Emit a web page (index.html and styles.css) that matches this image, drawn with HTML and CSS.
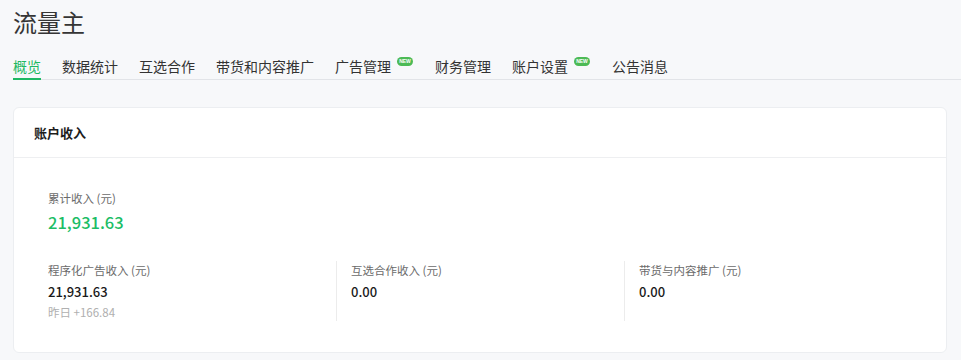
FILE: index.html
```html
<!DOCTYPE html>
<html lang="zh-CN">
<head>
<meta charset="utf-8">
<title>流量主</title>
<link rel="stylesheet" href="styles.css">
</head>
<body>
<div class="page">
  <h1 class="title">流量主</h1>
  <nav class="tabs">
    <a class="tab active">概览</a>
    <a class="tab">数据统计</a>
    <a class="tab">互选合作</a>
    <a class="tab">带货和内容推广</a>
    <a class="tab">广告管理<span class="badge">NEW</span></a>
    <a class="tab">财务管理</a>
    <a class="tab">账户设置<span class="badge">NEW</span></a>
    <a class="tab">公告消息</a>
  </nav>
  <section class="card">
    <div class="card-head">账户收入</div>
    <div class="card-body">
      <div class="total">
        <div class="label">累计收入 (元)</div>
        <div class="total-value">21,931.63</div>
      </div>
      <div class="stats">
        <div class="stat">
          <div class="label">程序化广告收入 (元)</div>
          <div class="value">21,931.63</div>
          <div class="sub">昨日 +166.84</div>
        </div>
        <div class="stat">
          <div class="label">互选合作收入 (元)</div>
          <div class="value">0.00</div>
        </div>
        <div class="stat">
          <div class="label">带货与内容推广 (元)</div>
          <div class="value">0.00</div>
        </div>
      </div>
    </div>
  </section>
</div>
</body>
</html>
```
FILE: styles.css
```css
html, body {
  margin: 0;
  padding: 0;
  background: #f7f8fa;
  font-family: "Noto Sans CJK SC", "Noto Sans", sans-serif;
  color: #333;
}
.page {
  padding: 5px 14px 0 13px;
}
.title {
  margin: 0;
  font-size: 24px;
  line-height: 34px;
  font-weight: 400;
  color: #353535;
}
.tabs {
  display: flex;
  gap: 21px;
  margin-top: 16px;
  margin-right: -14px;
  border-bottom: 1px solid #e2e4e8;
}
.tab {
  display: flex;
  align-items: flex-start;
  font-size: 14px;
  line-height: 22px;
  color: #333;
  padding-bottom: 1px;
  border-bottom: 2px solid transparent;
  margin-bottom: -1px;
}
.tab.active {
  color: #1fb863;
  border-bottom-color: #1fb863;
}
.badge {
  display: inline-block;
  margin: 2px 1px 0 6px;
  width: 16px;
  height: 9px;
  border-radius: 5px;
  background: #4cba55;
  color: #fff;
  font-size: 5px;
  line-height: 9px;
  text-align: center;
  font-weight: 700;
  font-family: "Liberation Sans", sans-serif;
}
.card {
  margin-top: 27px;
  background: #fff;
  border: 1px solid #eceef1;
  border-radius: 6px;
}
.card-head {
  height: 49px;
  line-height: 49px;
  padding-left: 20px;
  font-size: 13px;
  font-weight: 700;
  color: #1d1d1d;
  border-bottom: 1px solid #eeeff1;
}
.card-body {
  padding: 31px 34px 31px;
}
.label {
  font-size: 11.5px;
  line-height: 18px;
  color: #6b6b6b;
}
.total-value {
  margin-top: 3px;
  font-size: 16.5px;
  line-height: 24px;
  font-weight: 500;
  color: #1cbd66;
}
.stats {
  display: grid;
  grid-template-columns: repeat(3, 1fr);
  margin-top: 27px;
}
.stat + .stat {
  border-left: 1px solid #ececec;
  padding-left: 14px;
}
.value {
  margin-top: 2px;
  font-size: 13px;
  line-height: 22px;
  font-weight: 500;
  color: #1a1a1a;
}
.sub {
  font-size: 11.5px;
  line-height: 18px;
  color: #b0b0b0;
}
```
